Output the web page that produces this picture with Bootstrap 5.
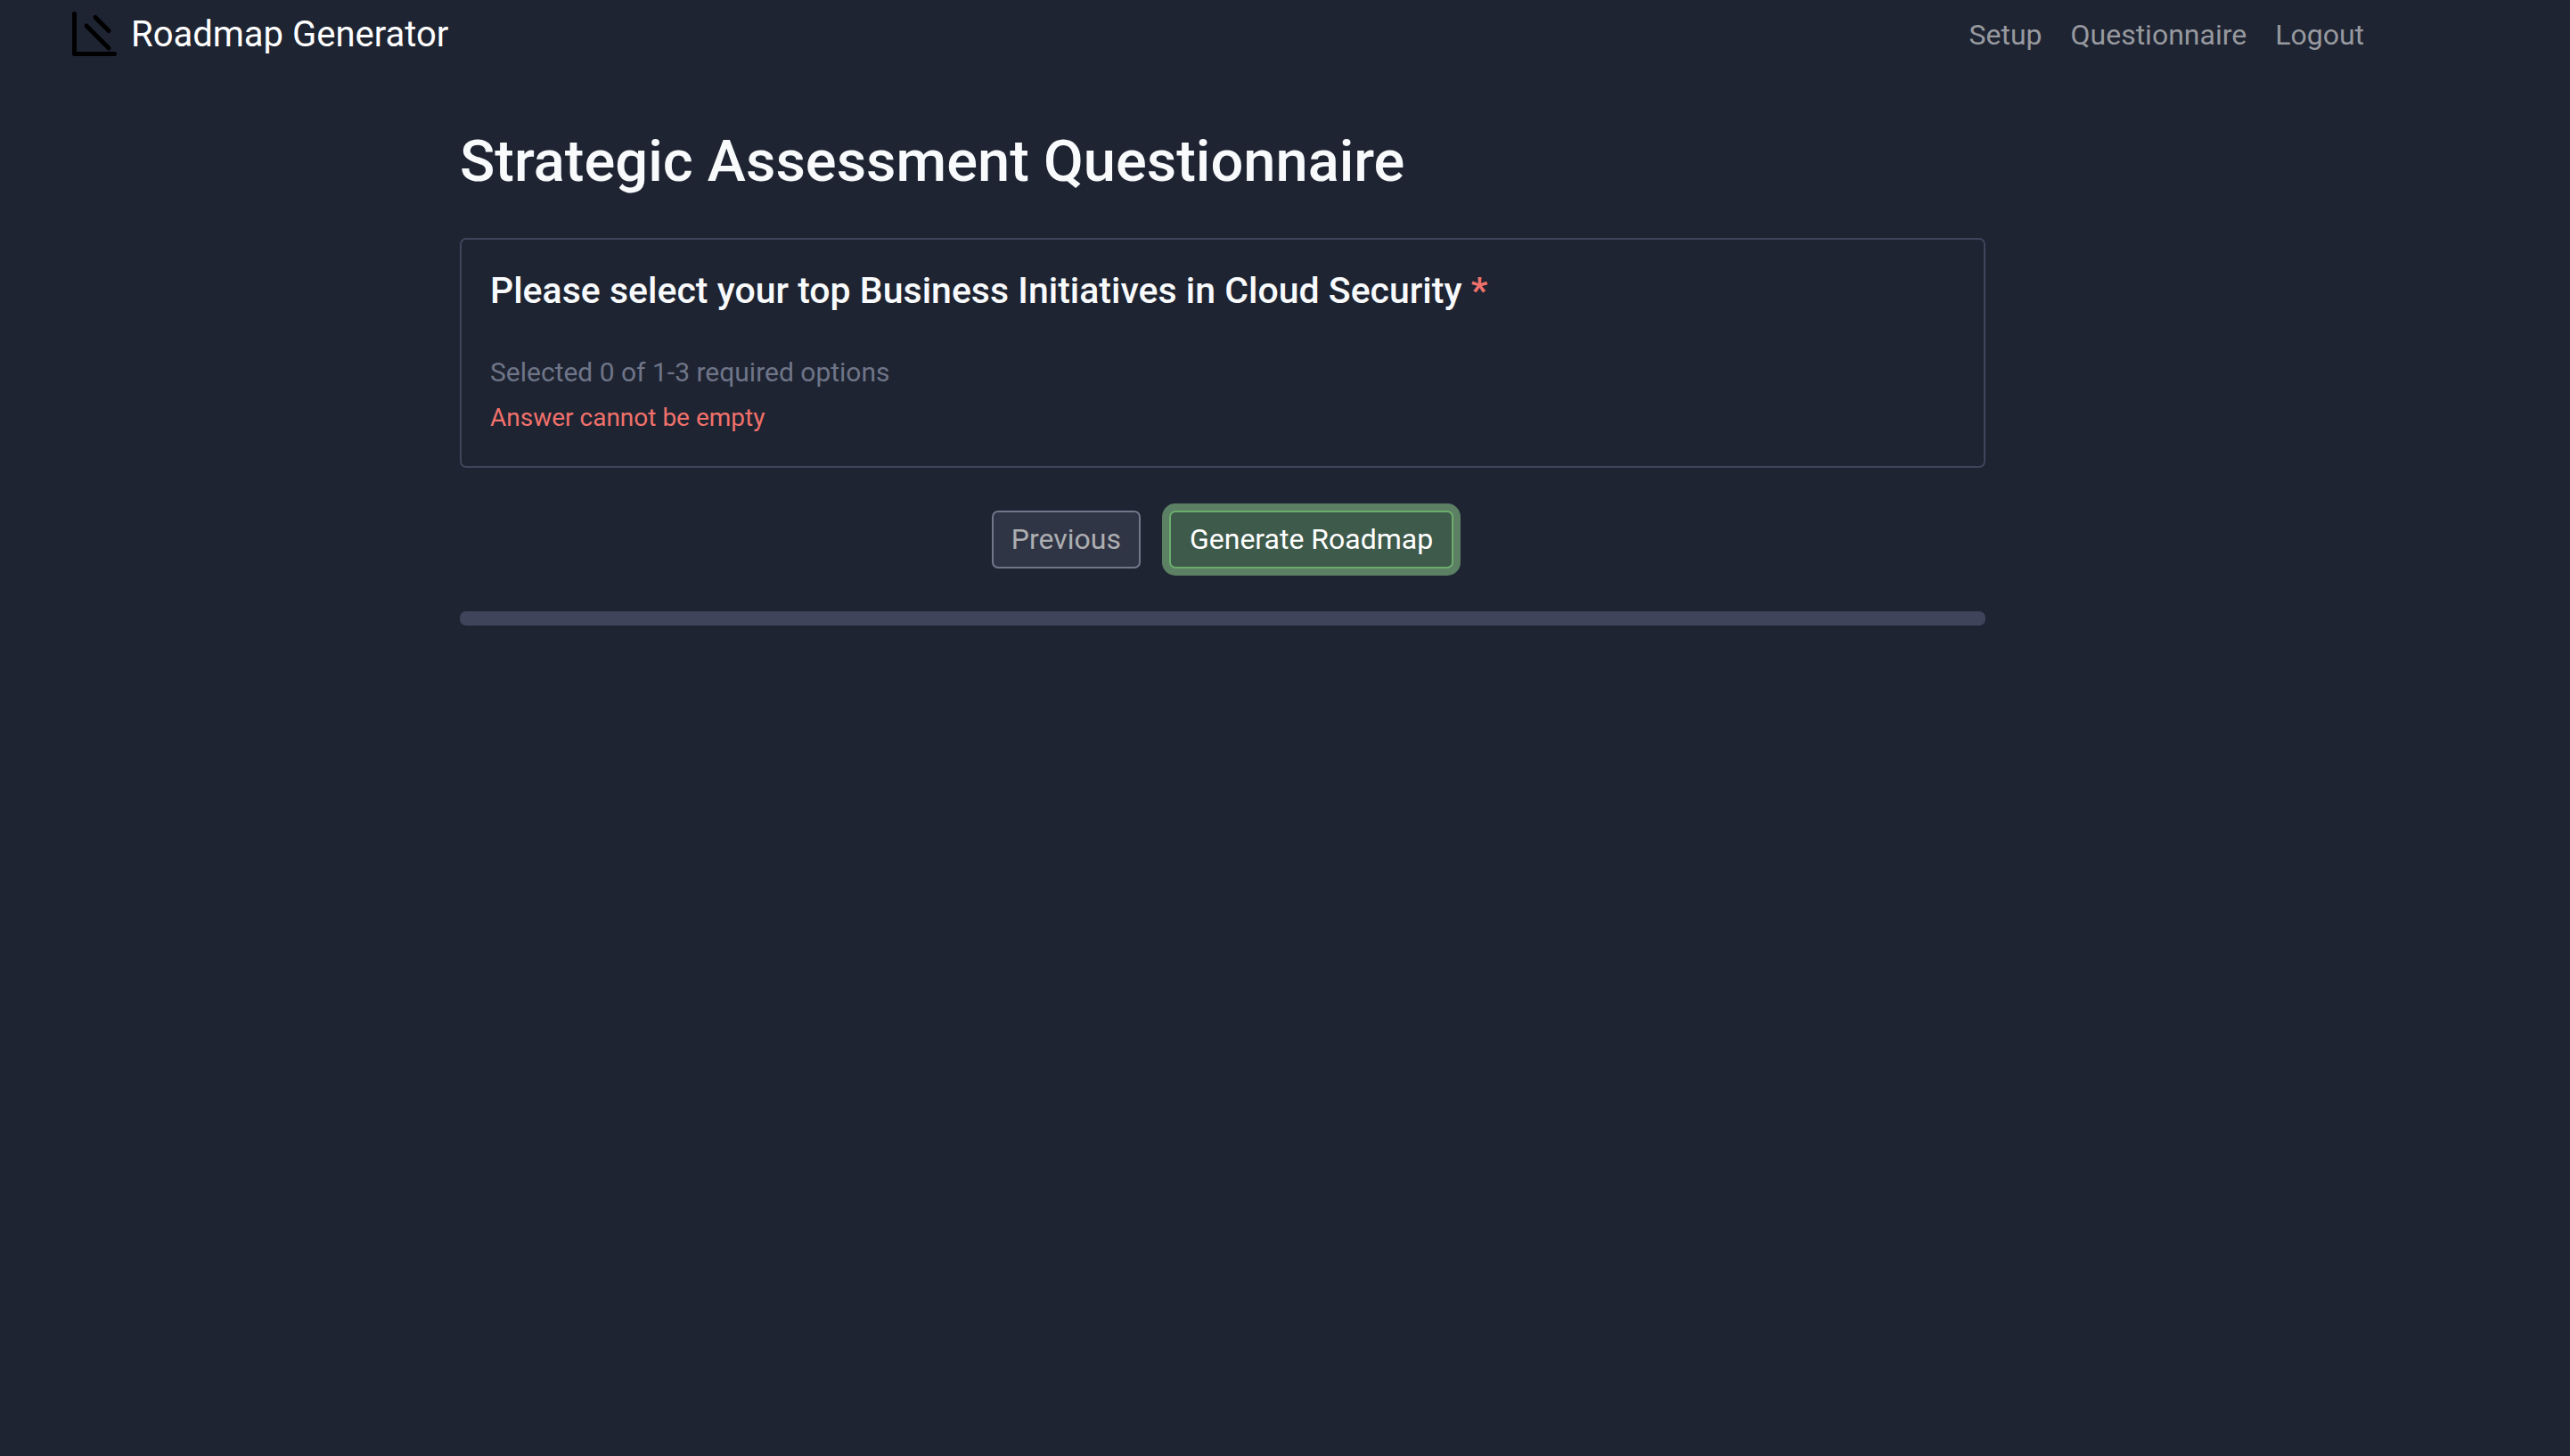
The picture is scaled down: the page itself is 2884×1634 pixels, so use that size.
<!DOCTYPE html>
<html lang="en">
<head>
<meta charset="utf-8">
<meta name="viewport" content="width=device-width, initial-scale=1">
<title>Roadmap Generator</title>
<link href="https://cdn.jsdelivr.net/npm/bootstrap@5.3.0/dist/css/bootstrap.min.css" rel="stylesheet">
<style>
  html { font-size: 32px; }
  body {
    background: #1e2432;
    color: #f8fafc;
    font-family: Roboto, "Liberation Sans", sans-serif;
    padding-right: 140px;
  }
  .site-nav { min-height: 78px; padding: 0 75px; --bs-navbar-brand-padding-y: 0; }
  .site-nav .navbar-brand { font-size: 40px; line-height: 60px; gap: 12px; color: #fff; margin: 0; }
  .site-nav .nav-link { font-size: 32px; line-height: 48px; padding: 0 16px; color: #97999f; }
  .brand-icon { width: 60px; height: 60px; }
  .page-main { max-width: 1712px; padding-top: 64px; }
  .page-title { font-size: 65px; line-height: 78px; font-weight: 500; margin-bottom: 47px; }
  .question-card { background: transparent; border: 2px solid #41455b; border-radius: 7px; color: inherit; }
  .question-title { font-size: 41px; line-height: 50px; font-weight: 500; margin-bottom: 45px; }
  .hint-text { font-size: 30px; line-height: 44px; color: #6f7588; margin-bottom: 7px; }
  .error-text { font-size: 28px; line-height: 44px; margin: 0; }
  .accent-red { color: #f1716b; }
  .quiz-btn {
    --bs-btn-font-size: 32px;
    --bs-btn-line-height: 45px;
    --bs-btn-padding-x: 20px;
    --bs-btn-padding-y: 8px;
    --bs-btn-border-width: 2px;
    --bs-btn-border-radius: 7px;
  }
  .quiz-btn-prev {
    --bs-btn-disabled-color: #adaeb2;
    --bs-btn-disabled-bg: #303545;
    --bs-btn-disabled-border-color: #717789;
    --bs-btn-disabled-opacity: 1;
  }
  .quiz-btn-next {
    --bs-btn-padding-x: 21px;
    --bs-btn-color: #fff;
    --bs-btn-bg: #3e5a4b;
    --bs-btn-border-color: #6cad6c;
    --bs-btn-hover-color: #fff;
    --bs-btn-hover-bg: #3e5a4b;
    --bs-btn-hover-border-color: #6cad6c;
    box-shadow: 0 0 0 8px #5c8064;
  }
  .quiz-progress { --bs-progress-height: 16px; --bs-progress-bg: #40445a; --bs-progress-border-radius: 7px; }
</style>
<script src="https://cdn.jsdelivr.net/npm/bootstrap@5.3.0/dist/js/bootstrap.bundle.min.js" defer></script>
</head>
<body>
  <nav class="navbar navbar-expand site-nav d-flex justify-content-between">
    <a class="navbar-brand d-flex align-items-center" href="#">
      <svg class="brand-icon" viewBox="0 0 60 60" fill="none" stroke="#000" stroke-width="5" stroke-linecap="round" stroke-linejoin="round" aria-hidden="true">
        <path d="M8.500 6.500V51.500H53.500"/>
        <path d="M22 20L47 45M32 10.500L47 25.500"/>
      </svg>
      <span>Roadmap Generator</span>
    </a>
    <div class="navbar-nav">
      <a class="nav-link" href="#">Setup</a>
      <a class="nav-link" href="#">Questionnaire</a>
      <a class="nav-link" href="#">Logout</a>
    </div>
  </nav>

  <main class="page-main mx-auto">
    <h1 class="page-title">Strategic Assessment Questionnaire</h1>
    <section class="card question-card">
      <div class="card-body p-3">
        <h2 class="question-title">Please select your top Business Initiatives in Cloud Security <span class="accent-red fw-bold">*</span></h2>
        <p class="hint-text">Selected 0 of 1-3 required options</p>
        <p class="error-text accent-red">Answer cannot be empty</p>
      </div>
    </section>
    <div class="d-flex justify-content-center gap-3 mt-4 mb-4">
      <button type="button" class="btn quiz-btn quiz-btn-prev" disabled>Previous</button>
      <button type="button" class="btn quiz-btn quiz-btn-next">Generate Roadmap</button>
    </div>
    <div class="progress quiz-progress" role="progressbar" aria-label="Questionnaire progress" aria-valuenow="0" aria-valuemin="0" aria-valuemax="100">
      <div class="progress-bar" style="width: 0%"></div>
    </div>
  </main>
</body>
</html>
